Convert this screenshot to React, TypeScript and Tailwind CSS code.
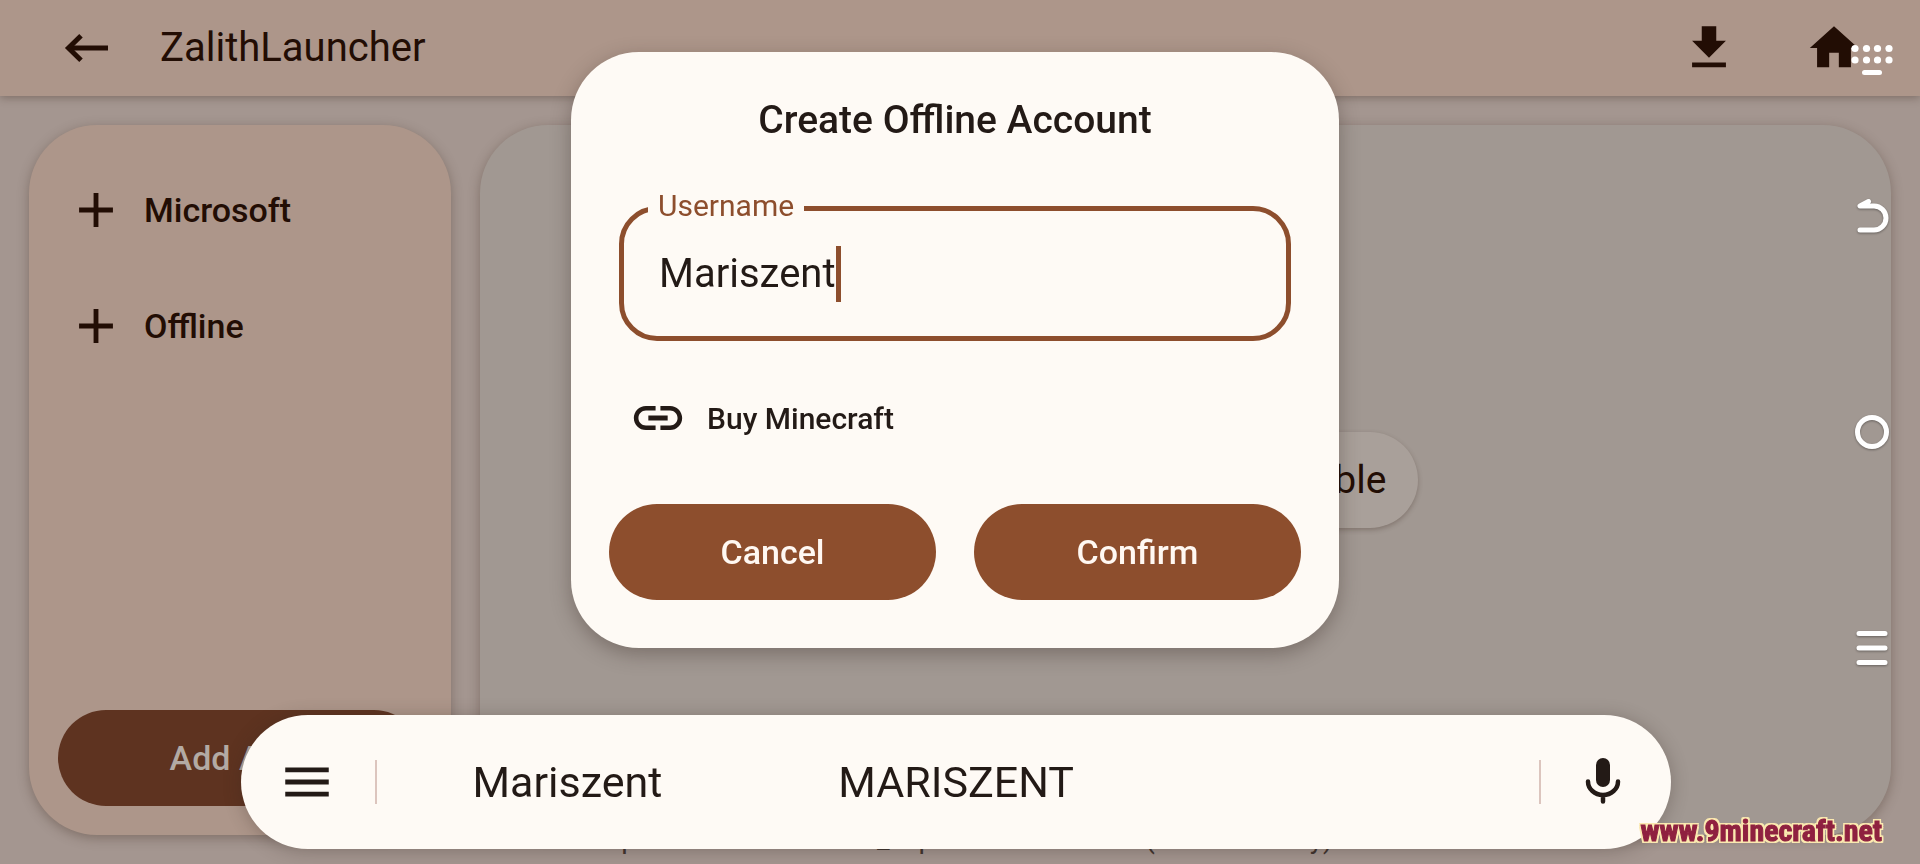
import React from "react";

const ICONS = {
  add: "M19 13h-6v6h-2v-6H5v-2h6V5h2v6h6v2z",
  download: "M19 9h-4V3H9v6H5l7 7 7-7zM5 18v2h14v-2H5z",
  home: "M10 20v-6h4v6h5v-8h3L12 3 2 12h3v8z",
  link: "M3.9 12c0-1.71 1.39-3.1 3.1-3.1h4V7H7c-2.76 0-5 2.24-5 5s2.24 5 5 5h4v-1.9H7c-1.71 0-3.1-1.39-3.1-3.1zM8 13h8v-2H8v2zm9-6h-4v1.9h4c1.71 0 3.1 1.39 3.1 3.1s-1.39 3.1-3.1 3.1h-4V17h4c2.76 0 5-2.24 5-5s-2.24-5-5-5z",
  menu: "M3 18h18v-2H3v2zm0-5h18v-2H3v2zm0-7v2h18V6H3z",
};

function Icon({ name }: { name: keyof typeof ICONS }) {
  return (
    <svg viewBox="0 0 24 24" className="size-[58px] shrink-0 fill-current" aria-hidden="true">
      <path d={ICONS[name]} />
    </svg>
  );
}

function AccountType({ label }: { label: string }) {
  return (
    <button type="button" className="flex h-24 w-full items-center gap-[19px] px-[9px] text-[34px] font-medium">
      <Icon name="add" />
      {label}
    </button>
  );
}

function FilledButton({ children }: { children: React.ReactNode }) {
  return (
    <button type="button" className="h-24 flex-1 rounded-full bg-[#8d4e2d] text-[34px] font-medium text-[#fff8f2]">
      {children}
    </button>
  );
}

function Header() {
  return (
    <header className="relative z-10 flex h-24 items-center bg-[#ad968a] pr-[57px] pl-[58px] shadow-[0_2px_8px_rgba(60,40,30,0.35)]">
      <button type="button" aria-label="Back">
        <svg viewBox="0 0 58 58" className="size-[58px] fill-none stroke-current" strokeWidth="5" aria-hidden="true">
          <path d="M50 29H11" />
          <path d="M23 16.800 10.500 29 23 41.200" />
        </svg>
      </button>
      <h1 className="ml-11 flex-1 text-[40px]">ZalithLauncher</h1>
      <div className="flex gap-[67px]">
        <button type="button" aria-label="Download"><Icon name="download" /></button>
        <button type="button" aria-label="Home"><Icon name="home" /></button>
      </div>
    </header>
  );
}

function AccountDialog() {
  return (
    <div className="fixed inset-0 z-20 flex items-start justify-center pt-[52px] pr-[10px]">
      <form
        role="dialog"
        aria-labelledby="dialog-title"
        className="flex w-[768px] flex-col rounded-[68px] bg-[#fefaf5] px-[38px] pt-10 pb-12 text-[#231a16] shadow-[0_6px_20px_rgba(50,35,30,0.35)]"
      >
        <h2 id="dialog-title" className="text-center text-[39px] leading-[56px] font-medium">Create Offline Account</h2>
        <fieldset className="mx-[10px] mt-[42px] h-[151px] rounded-[38px] border-[5px] border-[#8d4e2d] pl-6">
          <legend className="px-[10px] pb-1 text-[30px] leading-8 text-[#8d4e2d]">
            <label htmlFor="username">Username</label>
          </legend>
          <div className="flex h-24 items-center pl-[11px]">
            <input
              id="username"
              type="text"
              defaultValue="Mariszent"
              className="field-sizing-content bg-transparent text-[40px] caret-transparent outline-none"
            />
            <span className="h-14 w-[5px] bg-[#8d4e2d]" aria-hidden="true" />
          </div>
        </fieldset>
        <a href="#buy" className="mt-12 ml-5 flex items-center gap-5 self-start text-[30px] font-medium">
          <Icon name="link" />
          Buy Minecraft
        </a>
        <div className="mt-[57px] flex gap-[38px]">
          <FilledButton>Cancel</FilledButton>
          <FilledButton>Confirm</FilledButton>
        </div>
      </form>
    </div>
  );
}

function SuggestionBar() {
  return (
    <div className="fixed inset-x-0 bottom-[15px] z-30 flex justify-center pr-[9px]">
      <div className="flex h-[134px] w-[1430px] items-center rounded-full bg-[#fefaf5] pr-[39px] pl-[37px] text-[43px] text-[#231a16] shadow-[0_2px_18px_rgba(50,35,30,0.3)]">
        <button type="button" aria-label="Menu"><Icon name="menu" /></button>
        <span className="ml-[39px] h-11 w-[2px] bg-[#dcc5be]" />
        <button type="button" className="ml-24">Mariszent</button>
        <button type="button" className="ml-[176px]">MARISZENT</button>
        <span className="ml-auto h-11 w-[2px] bg-[#dcc5be]" />
        <button type="button" aria-label="Voice input" className="ml-[33px]">
          <svg viewBox="0 0 58 58" className="size-[58px]" aria-hidden="true">
            <rect x="22" y="5" width="14" height="29" rx="7" className="fill-current" />
            <path d="M14 28.500a15 13.500 0 0 0 30 0M29 42v6.500" className="fill-none stroke-current" strokeWidth="4.500" strokeLinecap="round" />
          </svg>
        </button>
      </div>
    </div>
  );
}

function SystemNav() {
  const stroke = "size-12 fill-none stroke-white drop-shadow-[0_1px_1px_rgba(0,0,0,0.35)]";
  return (
    <nav className="fixed inset-y-0 right-0 z-30 w-24" aria-label="System navigation">
      <button type="button" aria-label="Hide keyboard" className="absolute top-9 left-6">
        <svg viewBox="0 0 48 48" className="size-12 fill-white" aria-hidden="true">
          {[7, 18.5, 29.5, 41].map((x) => (
            <g key={x}>
              <circle cx={x} cy="12.500" r="3.600" />
              <circle cx={x} cy="24" r="3.600" />
            </g>
          ))}
          <rect x="14" y="34" width="20" height="5" rx="2.500" />
        </svg>
      </button>
      <div className="flex h-full flex-col items-center justify-around py-[108px]">
        <button type="button" aria-label="Back">
          <svg viewBox="0 0 48 48" className={stroke} strokeWidth="5" strokeLinecap="round" strokeLinejoin="round" aria-hidden="true">
            <path d="M20.500 9.500 12 14H26a12 12 0 0 1 0 24H12" />
          </svg>
        </button>
        <button type="button" aria-label="Home">
          <svg viewBox="0 0 48 48" className={stroke} strokeWidth="5" aria-hidden="true">
            <circle cx="24" cy="24" r="14.500" />
          </svg>
        </button>
        <button type="button" aria-label="Recents">
          <svg viewBox="0 0 48 48" className={stroke} strokeWidth="5" strokeLinecap="round" aria-hidden="true">
            <path d="M11 9.500h26M11 24h26M11 38.500h26" />
          </svg>
        </button>
      </div>
    </nav>
  );
}

export default function App() {
  return (
    <div className="relative flex min-h-screen flex-col overflow-hidden bg-[#a49690] font-['Roboto',sans-serif] text-[#220d04]">
      <Header />
      <main className="flex flex-1 gap-[29px] p-[29px]">
        <aside className="flex w-[422px] flex-col rounded-[68px] bg-[#ad968a] p-[29px] shadow-[0_3px_12px_rgba(60,40,30,0.35)]">
          <div className="flex flex-1 flex-col gap-5 pt-2">
            <AccountType label="Microsoft" />
            <AccountType label="Offline" />
          </div>
          <button type="button" className="h-24 rounded-full bg-[#5e3320] text-[34px] font-medium text-[#b3aaa4]">
            Add Auth
          </button>
        </aside>
        <section className="flex flex-1 items-center justify-center rounded-[68px] bg-[#a19892] shadow-[0_3px_12px_rgba(60,40,30,0.35)]">
          <p className="flex h-24 items-center rounded-full bg-[#a9a09a] px-8 text-[39px] shadow-[0_2px_5px_rgba(60,40,30,0.3)]">
            No account is available
          </p>
        </section>
      </main>
      <p className="absolute inset-x-0 bottom-[5px] pl-[34px] text-center text-[28px] leading-10 text-[#3f332e]">
        path to the accounts_export file is on disk (automatically)
      </p>
      <AccountDialog />
      <SuggestionBar />
      <SystemNav />
      <p className="fixed right-[38px] bottom-[13px] z-40 font-['Roboto_Condensed','Liberation_Sans_Narrow',Roboto,sans-serif] text-[30px] leading-10 font-bold text-[#8f2140] [text-shadow:-2px_0_#fbe9b0,2px_0_#fbe9b0,0_-2px_#fbe9b0,0_2px_#fbe9b0,2px_2px_#fbe9b0,-2px_-2px_#fbe9b0,2px_-2px_#fbe9b0,-2px_2px_#fbe9b0] [-webkit-text-stroke:1px_#8f2140]">
        www.9minecraft.net
      </p>
    </div>
  );
}
